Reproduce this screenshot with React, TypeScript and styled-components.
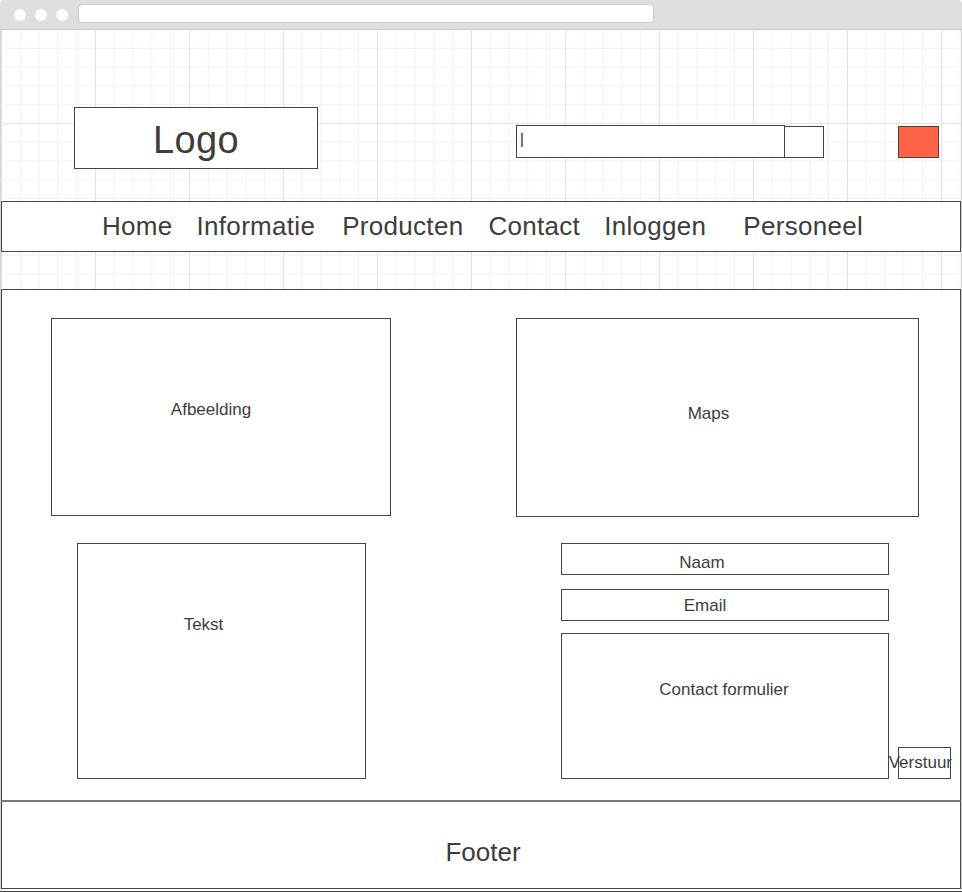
import React from 'react';
import styled, { createGlobalStyle } from 'styled-components';

const GlobalStyle = createGlobalStyle`
  html, body {
    margin: 0;
    padding: 0;
    background: #ffffff;
  }
  body {
    font-family: "Liberation Sans", Arial, sans-serif;
    color: #3d3d3d;
  }
`;

const Window = styled.div`
  width: 962px;
  height: 892px;
  box-sizing: border-box;
  border-bottom: 1px solid #444;
  padding-bottom: 1px;
  display: flex;
  flex-direction: column;
`;

const Chrome = styled.div`
  height: 29px;
  flex: none;
  background: #dedede;
  border-bottom: 1px solid #cdcdcd;
  border-radius: 4px 4px 0 0;
  display: flex;
  align-items: center;
  padding-left: 14px;
  gap: 9px;
`;

const Dot = styled.span`
  width: 12px;
  height: 12px;
  border-radius: 50%;
  background: #fff;
  flex: none;
`;

const AddressBar = styled.div`
  width: 576px;
  height: 19px;
  box-sizing: border-box;
  margin-left: 1px;
  margin-top: -2px;
  background: #fff;
  border: 1px solid #cacaca;
  border-radius: 4px;
`;

const Canvas = styled.div`
  flex: 1;
  display: flex;
  flex-direction: column;
  border-left: 1px solid #d4d4d4;
  border-right: 1px solid #d4d4d4;
  background-color: #fff;
  background-image:
    linear-gradient(to right, #e3e3e3 1px, transparent 1px),
    linear-gradient(to bottom, #e3e3e3 1px, transparent 1px),
    linear-gradient(to right, #f1f1f1 1px, transparent 1px),
    linear-gradient(to bottom, #f1f1f1 1px, transparent 1px);
  background-size: 94px 94px, 94px 94px, 18.8px 18.8px, 18.8px 18.8px;
  background-position: 0 -1px;
`;

const Header = styled.div`
  height: 171px;
  box-sizing: border-box;
  display: flex;
  align-items: flex-start;
  padding: 77px 0 0 73px;
`;

const Logo = styled.div`
  width: 244px;
  height: 62px;
  box-sizing: border-box;
  border: 1px solid #444;
  background: #fff;
  font-size: 38px;
  letter-spacing: 0.4px;
  display: flex;
  align-items: center;
  justify-content: center;
  padding-top: 4px;
`;

const SearchGroup = styled.div`
  display: flex;
  align-items: flex-start;
  margin: 18px 0 0 198px;
`;

const SearchInput = styled.div`
  width: 269px;
  height: 33px;
  box-sizing: border-box;
  border: 1px solid #444;
  background: #fff;
  font-size: 15px;
  line-height: 15px;
  padding: 5px 0 0 3px;
  color: #222;
`;

const SearchButton = styled.div`
  width: 40px;
  height: 32px;
  box-sizing: border-box;
  border: 1px solid #444;
  background: #fff;
  margin: 1px 0 0 -1px;
`;

const RedButton = styled.div`
  width: 41px;
  height: 32px;
  box-sizing: border-box;
  border: 1px solid #444;
  background: #ff6347;
  margin: 19px 0 0 74px;
`;

const Nav = styled.nav`
  height: 51px;
  box-sizing: border-box;
  border: 1px solid #444;
  background: #fff;
  display: flex;
  align-items: center;
  padding: 0 0 1px 100px;
`;

const NavItem = styled.span<{ $gap?: number }>`
  font-size: 26px;
  letter-spacing: 0.3px;
  margin-left: ${p => p.$gap ?? 0}px;
  white-space: nowrap;
`;

const Strip = styled.div`
  height: 37px;
  flex: none;
`;

const Main = styled.main`
  height: 512px;
  box-sizing: border-box;
  border: 1px solid #444;
  border-bottom-color: #777;
  background: #fff;
  display: flex;
  flex-direction: column;
  padding-top: 28px;
`;

const Row = styled.div<{ $top?: number; $left: number; $gap: number }>`
  display: flex;
  align-items: flex-start;
  margin-top: ${p => p.$top ?? 0}px;
  padding-left: ${p => p.$left}px;
  gap: ${p => p.$gap}px;
`;

const Panel = styled.div<{ $w: number; $h: number; $pt: number; $shift?: number }>`
  width: ${p => p.$w}px;
  height: ${p => p.$h}px;
  box-sizing: border-box;
  border: 1px solid #444;
  display: flex;
  justify-content: center;
  align-items: flex-start;
  padding-top: ${p => p.$pt}px;
  padding-right: ${p => (p.$shift ?? 0) * 2}px;
  font-size: 17px;
  line-height: 20px;
  flex: none;
`;

const FormColumn = styled.div`
  display: flex;
  flex-direction: column;
  width: 337px;
`;

const FormBottom = styled.div`
  display: flex;
  align-items: flex-end;
  gap: 9px;
  margin-top: 12px;
`;

const SendButton = styled.div`
  width: 53px;
  height: 32px;
  box-sizing: border-box;
  border: 1px solid #444;
  display: flex;
  align-items: center;
  justify-content: flex-end;
  font-size: 17px;
  white-space: nowrap;
  overflow: visible;
  flex: none;
`;

const SendLabel = styled.span`
  margin-right: -2px;
`;

const Footer = styled.footer`
  height: 88px;
  box-sizing: border-box;
  border: 1px solid #444;
  border-top-color: #777;
  background: #fff;
  display: flex;
  justify-content: center;
  align-items: flex-start;
  padding: 35px 0 0 4px;
  font-size: 26px;
  line-height: 30px;
`;

const BottomGap = styled.div`
  height: 1px;
  background: #fff;
`;

export default function App() {
  return (
    <>
      <GlobalStyle />
      <Window>
        <Chrome>
          <Dot />
          <Dot />
          <Dot />
          <AddressBar />
        </Chrome>
        <Canvas>
          <Header>
            <Logo>Logo</Logo>
            <SearchGroup>
              <SearchInput>|</SearchInput>
              <SearchButton />
            </SearchGroup>
            <RedButton />
          </Header>
          <Nav>
            <NavItem>Home</NavItem>
            <NavItem $gap={24}>Informatie</NavItem>
            <NavItem $gap={27}>Producten</NavItem>
            <NavItem $gap={25}>Contact</NavItem>
            <NavItem $gap={24}>Inloggen</NavItem>
            <NavItem $gap={37}>Personeel</NavItem>
          </Nav>
          <Strip />
          <Main>
            <Row $left={49} $gap={125}>
              <Panel $w={340} $h={198} $pt={81} $shift={10}>Afbeelding</Panel>
              <Panel $w={403} $h={199} $pt={85} $shift={9}>Maps</Panel>
            </Row>
            <Row $top={26} $left={75} $gap={195}>
              <Panel $w={289} $h={236} $pt={71} $shift={18}>Tekst</Panel>
              <FormColumn>
                <Panel $w={328} $h={32} $pt={9} $shift={23}>Naam</Panel>
                <Panel $w={328} $h={32} $pt={6} $shift={20} style={{ marginTop: 14 }}>Email</Panel>
                <FormBottom>
                  <Panel $w={328} $h={146} $pt={46} $shift={1}>Contact formulier</Panel>
                  <SendButton>
                    <SendLabel>Verstuur</SendLabel>
                  </SendButton>
                </FormBottom>
              </FormColumn>
            </Row>
          </Main>
          <Footer>Footer</Footer>
          <BottomGap />
        </Canvas>
      </Window>
    </>
  );
}
